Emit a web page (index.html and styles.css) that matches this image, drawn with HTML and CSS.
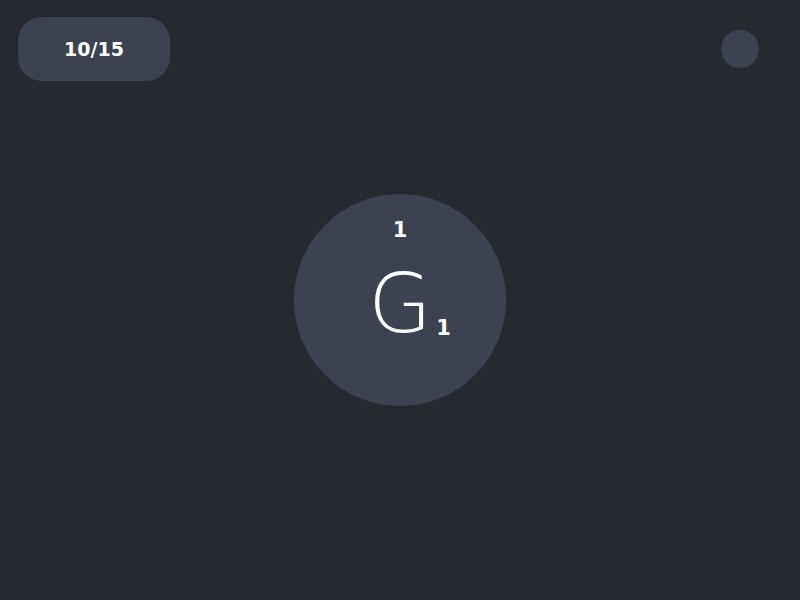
FILE: index.html
```html
<!DOCTYPE html>
<html>
<head>
<meta charset="utf-8">
<link rel="stylesheet" href="styles.css">
</head>
<body>
<div class="app">
  <header class="topbar">
    <div class="counter">10/15</div>
    <div class="dot"></div>
  </header>
  <main class="tile">
    <div class="tile-value">1</div>
    <div class="letter-wrap">
      <span class="letter">G</span>
      <span class="sub">1</span>
    </div>
  </main>
</div>
</body>
</html>
```
FILE: styles.css
```css
html, body {
  margin: 0;
  padding: 0;
  background: #262930;
}
body {
  font-family: "DejaVu Sans", sans-serif;
  color: #ffffff;
}
.app {
  width: 800px;
  height: 600px;
  display: grid;
  grid-template: 1fr / 1fr;
}
.topbar {
  grid-area: 1 / 1;
  align-self: start;
  display: flex;
  justify-content: space-between;
  align-items: center;
  padding: 17px 41px 0 18px;
}
.counter {
  width: 152px;
  height: 64px;
  border-radius: 24px;
  background: #3d4250;
  display: flex;
  align-items: center;
  justify-content: center;
  font-size: 19px;
  font-weight: 700;
}
.dot {
  width: 38px;
  height: 38px;
  border-radius: 50%;
  background: #3d4250;
}
.tile {
  grid-area: 1 / 1;
  place-self: center;
  width: 212px;
  height: 212px;
  border-radius: 50%;
  background: #3d4250;
  display: flex;
  flex-direction: column;
  align-items: center;
  box-sizing: border-box;
  padding-top: 24px;
}
.tile-value {
  font-size: 21px;
  font-weight: 700;
  line-height: 24px;
}
.letter-wrap {
  position: relative;
  margin-top: 21px;
}
.letter {
  display: block;
  font-size: 82px;
  font-weight: 200;
  line-height: 82px;
}
.sub {
  position: absolute;
  left: 68px;
  bottom: 5px;
  font-size: 21px;
  font-weight: 700;
  line-height: 24px;
}
```
